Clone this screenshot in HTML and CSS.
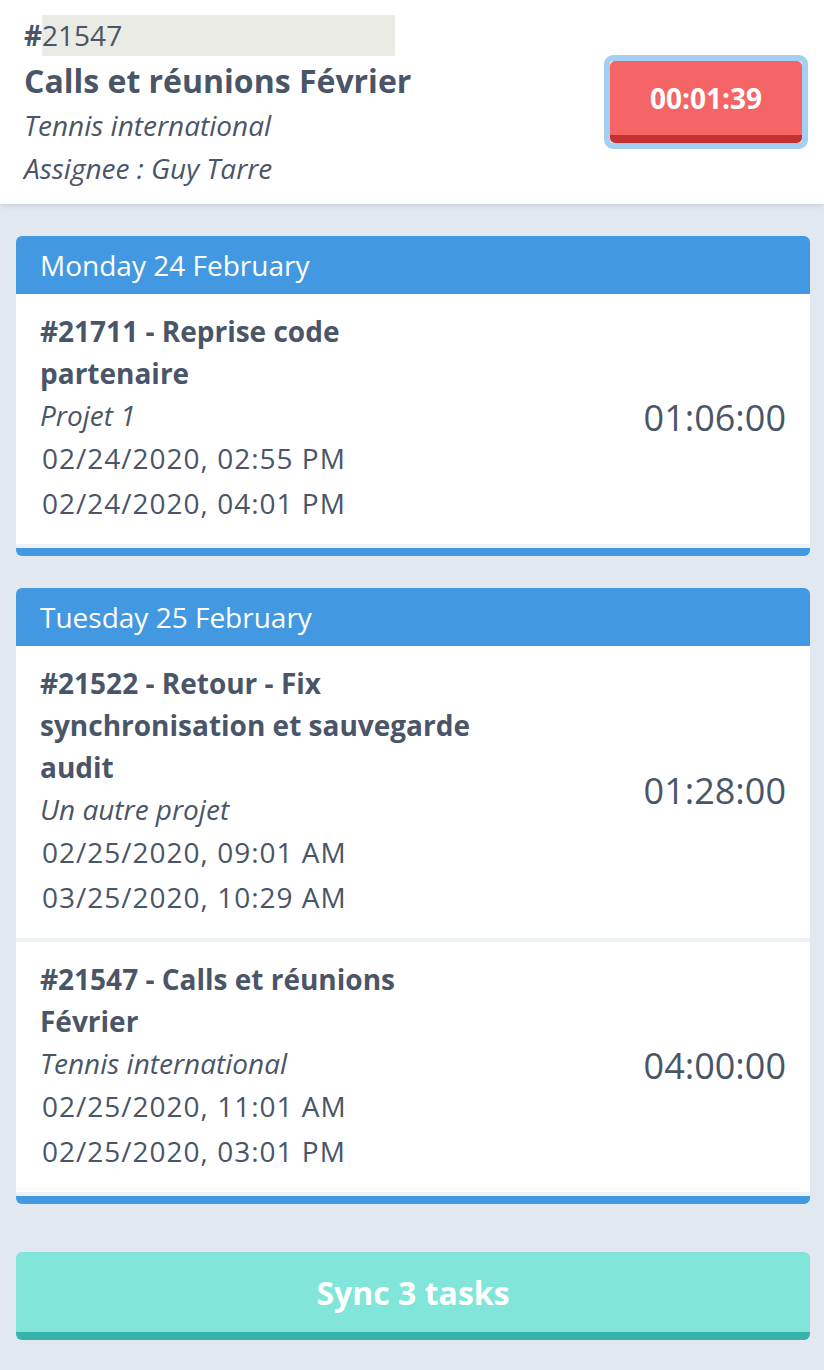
FILE: index.html
```html
<!DOCTYPE html>
<html>
<head>
<meta charset="utf-8">
<link rel="stylesheet" href="styles.css">
</head>
<body>
<header class="top">
  <div class="top-info">
    <div class="ref"><b>#</b><span class="ref-field">21547</span></div>
    <div class="top-title">Calls et réunions Février</div>
    <div class="top-sub">Tennis international</div>
    <div class="top-sub last">Assignee : Guy Tarre</div>
  </div>
  <div class="timer-wrap"><div class="timer">00:01:39</div></div>
</header>
<main class="content">
  <section class="day">
    <div class="day-head">Monday 24 February</div>
    <div class="row">
      <div class="row-info">
        <div class="row-title">#21711 - Reprise code partenaire</div>
        <div class="row-proj">Projet 1</div>
        <div class="row-date">02/24/2020, 02:55 PM</div>
        <div class="row-date">02/24/2020, 04:01 PM</div>
      </div>
      <div class="row-dur">01:06:00</div>
    </div>
  </section>
  <section class="day">
    <div class="day-head">Tuesday 25 February</div>
    <div class="row">
      <div class="row-info">
        <div class="row-title">#21522 - Retour - Fix synchronisation et sauvegarde audit</div>
        <div class="row-proj">Un autre projet</div>
        <div class="row-date">02/25/2020, 09:01 AM</div>
        <div class="row-date">03/25/2020, 10:29 AM</div>
      </div>
      <div class="row-dur">01:28:00</div>
    </div>
    <div class="row">
      <div class="row-info">
        <div class="row-title">#21547 - Calls et réunions Février</div>
        <div class="row-proj">Tennis international</div>
        <div class="row-date">02/25/2020, 11:01 AM</div>
        <div class="row-date">02/25/2020, 03:01 PM</div>
      </div>
      <div class="row-dur">04:00:00</div>
    </div>
  </section>
  <button class="sync">Sync 3 tasks</button>
</main>
</body>
</html>
```

FILE: styles.css
```css
* { box-sizing: border-box; }
html, body { margin: 0; padding: 0; }
body {
  background: #e2e8f0;
  font-family: "Open Sans", "Noto Sans", sans-serif;
  color: #4a5568;
  width: 824px;
  min-height: 1370px;
}
.top {
  background: #fff;
  height: 204px;
  display: flex;
  align-items: center;
  justify-content: space-between;
  padding: 0 16px 0 24px;
  box-shadow: 0 2px 4px rgba(0,0,0,0.10);
}
.top-info { display: flex; flex-direction: column; }
.ref { font-size: 28px; height: 44px; display: flex; align-items: flex-start; line-height: 41px; }
.ref b { font-weight: 700; }
.ref-field {
  background: #ebebe6;
  width: 353px;
  height: 41px;
  line-height: 41px;
}
.top-title { font-size: 32px; font-weight: 700; line-height: 44px; }
.top-sub { font-size: 28px; font-style: italic; line-height: 44px; }
.top-sub.last { line-height: 42px; }
.timer-wrap {
  border: 6px solid #a3cff3;
  border-radius: 9px;
  width: 204px;
  height: 94px;
  display: flex;
}
.timer {
  flex: 1;
  background: #f56565;
  border-bottom: 8px solid #c53030;
  border-radius: 5px;
  color: #fff;
  font-weight: 700;
  font-size: 28px;
  display: flex;
  align-items: center;
  justify-content: center;
  padding-bottom: 1px;
}
.content {
  padding: 32px 14px 30px 16px;
  display: flex;
  flex-direction: column;
  gap: 32px;
}
.day {
  background: #4299e1;
  border-radius: 6px;
  overflow: hidden;
  padding-bottom: 8px;
}
.day-head {
  height: 58px;
  color: #fff;
  font-size: 28px;
  line-height: 58px;
  padding-left: 24px;
}
.row {
  background: #fff;
  border-bottom: 4px solid #edf2f7;
  display: flex;
  align-items: center;
  justify-content: space-between;
  padding: 16px 24px 18px 24px;
}
.row-info { width: 450px; }
.row-title { font-size: 28px; font-weight: 700; line-height: 42px; }
.row-proj { font-size: 28px; font-style: italic; line-height: 42px; }
.row-date { font-size: 28px; line-height: 45px; letter-spacing: 1px; padding-left: 2px; }
.row-dur { font-size: 36px; line-height: 42px; }
.sync {
  margin-top: 16px;
  height: 88px;
  border: none;
  border-bottom: 8px solid #38b2ac;
  border-radius: 6px;
  background: #81e6d9;
  color: #fff;
  font-family: "Open Sans", sans-serif;
  font-weight: 700;
  font-size: 32px;
  padding: 0;
}
```
